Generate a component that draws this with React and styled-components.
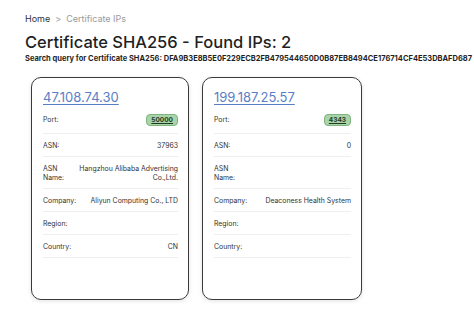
import styled, { createGlobalStyle } from "styled-components";

const Global = createGlobalStyle`
  body {
    margin: 0;
    background: #fff;
    font-family: "Inter", "Liberation Sans", sans-serif;
    color: #1f1f1f;
  }
`;

const Page = styled.div`
  padding: 12px 25px;
`;

const Crumbs = styled.div`
  display: flex;
  align-items: center;
  gap: 5px;
  font-size: 9px;
  height: 12px;
`;

const Crumb = styled.span`
  color: ${(p) => (p.muted ? "#9a9a9a" : "#333")};
`;

const Title = styled.h1`
  margin: 8px 0 0;
  font-size: 16.5px;
  font-weight: 500;
  line-height: 20px;
`;

const Query = styled.div`
  margin-top: 3px;
  font-size: 7.5px;
  line-height: 8px;
  font-weight: 700;
  white-space: nowrap;
`;

const Cards = styled.div`
  display: flex;
  gap: 13px;
  margin-top: 14px;
  padding-left: 6px;
`;

const Card = styled.div`
  width: ${(p) => p.w}px;
  height: 223px;
  box-sizing: border-box;
  border: 1.5px solid #3a3a3a;
  border-radius: 10px;
  padding: 11px 10px 0 11px;
  box-shadow: 0 1px 4px rgba(0, 0, 0, 0.12);
`;

const Ip = styled.a`
  display: block;
  font-size: 13px;
  line-height: 17px;
  color: #5a7ec6;
  text-decoration: underline;
  text-underline-offset: 2px;
`;

const Row = styled.div`
  display: flex;
  align-items: ${(p) => (p.top ? "flex-start" : "center")};
  font-size: 6.9px;
  line-height: 9px;
  padding: ${(p) => (p.tall ? "7.5px 0" : "6.5px 0")};
  min-height: 9px;
  border-bottom: 1px solid #efefef;
`;

const Label = styled.div`
  width: 31px;
  flex-shrink: 0;
  color: #333;
`;

const Value = styled.div`
  flex: 1;
  text-align: right;
  color: #333;
`;

const Badge = styled.span`
  display: inline-block;
  vertical-align: middle;
  background: #a9d3a9;
  border: 1px solid #7fb47f;
  border-radius: 4px;
  padding: 0 4px;
  font-size: 6.5px;
  font-weight: 700;
  line-height: 10px;
  text-decoration: underline;
  color: #1f3a1f;
`;

const hosts = [
  {
    ip: "47.108.74.30",
    port: "50000",
    asn: "37963",
    asnName: "Hangzhou Alibaba Advertising Co.,Ltd.",
    company: "Aliyun Computing Co., LTD",
    region: "",
    country: "CN",
    w: 158,
  },
  {
    ip: "199.187.25.57",
    port: "4343",
    asn: "0",
    asnName: "",
    company: "Deaconess Health System",
    region: "",
    country: "",
    w: 160,
  },
];

const HostCard = ({ h }) => (
  <Card w={h.w}>
    <Ip href="#">{h.ip}</Ip>
    <Row tall>
      <Label>Port:</Label>
      <Value>
        <Badge>{h.port}</Badge>
      </Value>
    </Row>
    <Row>
      <Label>ASN:</Label>
      <Value>{h.asn}</Value>
    </Row>
    <Row top>
      <Label>ASN Name:</Label>
      <Value>{h.asnName}</Value>
    </Row>
    <Row>
      <Label>Company:</Label>
      <Value>{h.company}</Value>
    </Row>
    <Row>
      <Label>Region:</Label>
      <Value>{h.region}</Value>
    </Row>
    <Row>
      <Label>Country:</Label>
      <Value>{h.country}</Value>
    </Row>
  </Card>
);

export default function App() {
  return (
    <Page>
      <Global />
      <Crumbs>
        <Crumb>Home</Crumb>
        <Crumb muted>&gt;</Crumb>
        <Crumb muted>Certificate IPs</Crumb>
      </Crumbs>
      <Title>Certificate SHA256 - Found IPs: 2</Title>
      <Query>
        Search query for Certificate SHA256:
        DFA9B3E8B5E0F229ECB2FB479544650D0B87EB8494CE176714CF4E53DBAFD687
      </Query>
      <Cards>
        {hosts.map((h) => (
          <HostCard key={h.ip} h={h} />
        ))}
      </Cards>
    </Page>
  );
}
